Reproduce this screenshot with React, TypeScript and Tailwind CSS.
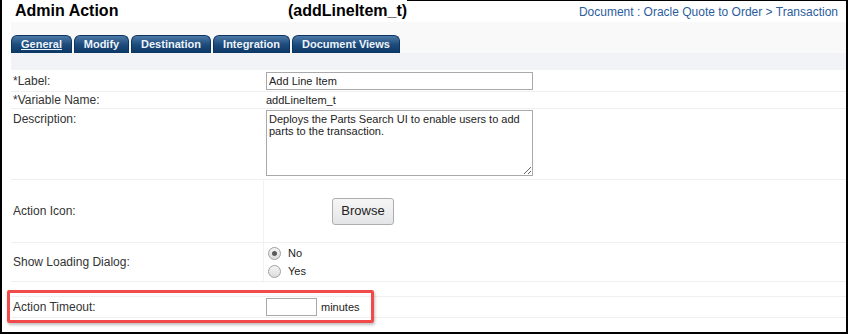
import React from "react";

const tabs = [
  { name: "General", w: "w-[61px]", active: true },
  { name: "Modify", w: "w-[55px]", active: false },
  { name: "Destination", w: "w-[80px]", active: false },
  { name: "Integration", w: "w-[77px]", active: false },
  { name: "Document Views", w: "w-[108px]", active: false },
];

function Radio({ checked, label }: { checked: boolean; label: string }) {
  return (
    <div className="flex items-center h-[18px]">
      <span className="ml-[4px] w-[13px] h-[13px] rounded-full border border-[#a0a0a0] bg-linear-to-b from-[#f4f4f4] to-[#dcdcdc] flex items-center justify-center">
        {checked && <span className="w-[5px] h-[5px] rounded-full bg-[#5a5a5a]" />}
      </span>
      <span className="ml-[7px] text-[11px] text-[#222]">{label}</span>
    </div>
  );
}

export default function App() {
  return (
    <div className="relative w-[848px] h-[334px] bg-white border-l-2 border-r-2 border-b-2 border-black overflow-hidden font-['Liberation_Sans',Arial,sans-serif] text-[#333]">
      <div className="flex flex-col h-full pl-[9px]">
        {/* header */}
        <div className="flex items-center h-[22px] bg-white">
          <div className="w-[277px] pl-[4px] text-[16px] font-bold text-black">Admin Action</div>
          <div className="text-[16px] font-bold text-black">(addLineItem_t)</div>
          <div className="flex-1 h-full flex items-center justify-end pr-[8px] border-t border-black text-[12px] text-[#2b5d9e]">
            Document : Oracle Quote to Order &gt; Transaction
          </div>
        </div>

        {/* tabs */}
        <div className="h-[31px] bg-[#f9f9f9] flex items-end gap-[2px]">
          {tabs.map((t) => (
            <div
              key={t.name}
              className={`${t.w} h-[18px] rounded-t-[6px] border border-b-0 border-[#0b3462] bg-linear-to-b from-[#4d79a6] via-[#1d4c7d] to-[#0b3765] text-center text-[11px] leading-[17px] font-bold text-[#eef4fb]`}
            >
              <span className={t.active ? "underline" : ""}>{t.name}</span>
            </div>
          ))}
        </div>
        <div className="h-[17px] bg-[#f2f3f7]" />

        {/* rows */}
        <div className="flex h-[22px] border-b border-[#efefef]">
          <div className="w-[253px] pl-[2px] flex items-center text-[12px]">*Label:</div>
          <div className="flex-1 pl-[2px] flex items-center">
            <input
              readOnly
              defaultValue="Add Line Item"
              className="w-[267px] h-[18px] border border-[#a9a9a9] px-[2px] text-[11px] text-[#222] outline-none"
            />
          </div>
        </div>

        <div className="flex h-[17px] border-b border-[#efefef]">
          <div className="w-[253px] pl-[2px] flex items-center text-[12px]">*Variable Name:</div>
          <div className="flex-1 pl-[2px] flex items-center text-[11px] text-[#222]">addLineItem_t</div>
        </div>

        <div className="flex h-[71px] border-b border-[#efefef]">
          <div className="w-[253px] pl-[2px] pt-[1px] text-[12px]">Description:</div>
          <div className="flex-1 pl-[2px] pt-[1px]">
            <textarea
              readOnly
              defaultValue="Deploys the Parts Search UI to enable users to add parts to the transaction."
              className="block w-[267px] h-[66px] border border-[#a9a9a9] px-[2px] py-[2px] text-[11px] leading-[12px] text-[#222] outline-none"
            />
          </div>
        </div>

        <div className="flex h-[63px] border-b border-[#efefef]">
          <div className="w-[253px] pl-[2px] flex items-center text-[12px] border-r border-[#f2f2f2]">Action Icon:</div>
          <div className="flex-1 flex items-center">
            <button className="ml-[68px] w-[62px] h-[27px] border border-[#adadad] rounded-[3px] bg-linear-to-b from-[#f6f6f6] to-[#e4e5e7] text-[13px] text-[#222]">
              Browse
            </button>
          </div>
        </div>

        <div className="flex h-[39px] border-b border-[#efefef]">
          <div className="w-[253px] pl-[2px] flex items-center text-[12px] border-r border-[#f2f2f2]">Show Loading Dialog:</div>
          <div className="flex-1 flex flex-col justify-center">
            <Radio checked label="No" />
            <Radio checked={false} label="Yes" />
          </div>
        </div>

        <div className="h-[15px] border-b border-[#efefef]" />

        <div className="flex h-[21px] border-b border-[#efefef]">
          <div className="w-[253px] pl-[2px] flex items-center text-[12px]">Action Timeout:</div>
          <div className="flex-1 pl-[2px] flex items-center">
            <input readOnly className="w-[51px] h-[18px] border border-[#a9a9a9] outline-none" />
            <span className="ml-[4px] text-[11px] text-[#222]">minutes</span>
          </div>
        </div>

        <div className="flex-1" />
      </div>

      {/* highlight annotation */}
      <div className="absolute left-[5px] top-[290px] w-[367px] h-[33px] border-[3px] border-[#f24a4a] rounded-[2px] shadow-[1px_2px_3px_rgba(0,0,0,0.25)]" />
    </div>
  );
}
